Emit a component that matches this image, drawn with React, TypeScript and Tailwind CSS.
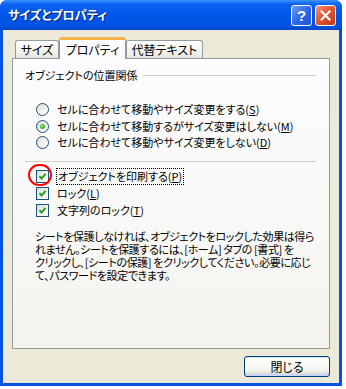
import React from "react";

const jp = "font-['Noto_Sans_CJK_JP',sans-serif] [font-feature-settings:'palt']";

function Radio({ checked }: { checked?: boolean }) {
  return (
    <span className="flex h-[13px] w-[13px] shrink-0 items-center justify-center rounded-full border border-[#1C5180] bg-[linear-gradient(135deg,#dcd9cf_0%,#f6f5f1_60%,#ffffff_100%)]">
      {checked && (
        <span className="h-[5px] w-[5px] rounded-full bg-[radial-gradient(circle_at_40%_40%,#a8e6a0_0%,#31b131_55%,#178a17_100%)]" />
      )}
    </span>
  );
}

function Check() {
  return (
    <span className="flex h-[13px] w-[13px] shrink-0 items-center justify-center border border-[#1C5180] bg-[linear-gradient(135deg,#dcd9cf_0%,#f6f5f1_60%,#ffffff_100%)]">
      <svg width="9" height="9" viewBox="0 0 9 9">
        <path d="M1.5 4.2 L3.6 6.4 L7.6 1.8" fill="none" stroke="#21A121" strokeWidth="2" />
      </svg>
    </span>
  );
}

export default function App() {
  return (
    <div className={`h-[389px] w-[346px] bg-white ${jp}`}>
      <div className="flex h-[386px] w-[342px] flex-col rounded-t-[7px] bg-[#0052E0] px-[3px] pb-[3px]">
        {/* title bar */}
        <div className="-mx-[3px] flex h-[30px] items-center rounded-t-[7px] bg-[linear-gradient(180deg,#3d93ff_0%,#0a62f2_14%,#0056e6_50%,#0053e2_86%,#0244c8_100%)] pl-[8px] pr-[6px]">
          <span className="flex-1 text-[12px] font-bold leading-none text-white [text-shadow:1px_1px_0_#0a1f80]">
            サイズとプロパティ
          </span>
          <div className="flex gap-[3px]">
            <span className="flex h-[21px] w-[21px] items-center justify-center rounded-[3px] border border-white bg-[linear-gradient(135deg,#6ea2fb_0%,#2d68ea_50%,#1f55d8_100%)] font-['Liberation_Sans',sans-serif] text-[15px] font-bold leading-none text-white">
              ?
            </span>
            <span className="flex h-[21px] w-[21px] items-center justify-center rounded-[3px] border border-white bg-[linear-gradient(135deg,#f29c80_0%,#e0562e_45%,#c53a18_100%)]">
              <svg width="11" height="11" viewBox="0 0 11 11">
                <path d="M1.5 1.5 L9.5 9.5 M9.5 1.5 L1.5 9.5" stroke="white" strokeWidth="2.2" strokeLinecap="square" />
              </svg>
            </span>
          </div>
        </div>

        {/* body */}
        <div className="flex flex-1 flex-col bg-[#ECE9D8] px-[9px] pt-[7px] pb-[6px] text-[11px] text-black">
          {/* tabs */}
          <div className="flex h-[21px] items-end pl-[3px] text-[12px]">
            <div className="flex h-[18px] w-[44px] items-center justify-center rounded-t-[3px] border border-b-0 border-[#919B9C] bg-[linear-gradient(180deg,#ffffff_0%,#f3f3ef_60%,#e6e5df_100%)] leading-none">
              サイズ
            </div>
            <div className="relative z-10 -mb-px flex h-[22px] w-[67px] items-center justify-center rounded-t-[3px] border border-b-0 border-t-[3px] border-[#919B9C] border-t-[#F5B14A] bg-[#FCFCFE] leading-none">
              プロパティ
            </div>
            <div className="flex h-[18px] w-[77px] items-center justify-center rounded-t-[3px] border border-b-0 border-[#919B9C] bg-[linear-gradient(180deg,#ffffff_0%,#f3f3ef_60%,#e6e5df_100%)] leading-none">
              代替テキスト
            </div>
          </div>

          {/* panel */}
          <div className="flex h-[291px] flex-col border border-[#919B9C] bg-[linear-gradient(180deg,#fcfcfe_0%,#f8f8f6_60%,#f4f3ee_100%)] pt-[10px]">
            <div className="mr-[13px] flex h-[12px] items-center gap-[5px] pl-[12px] leading-none">
              <span>オブジェクトの位置関係</span>
              <span className="h-px flex-1 bg-[#D0D0BF]" />
            </div>

            <div className="mt-[20px] flex flex-col pl-[23px]">
              <div className="flex h-[17px] items-center gap-[8px] leading-none">
                <Radio />
                <span>
                  セルに合わせて移動やサイズ変更をする(<span className="underline">S</span>)
                </span>
              </div>
              <div className="flex h-[16px] items-center gap-[8px] leading-none">
                <Radio checked />
                <span>
                  セルに合わせて移動するがサイズ変更はしない(<span className="underline">M</span>)
                </span>
              </div>
              <div className="flex h-[16px] items-center gap-[8px] leading-none">
                <Radio />
                <span>
                  セルに合わせて移動やサイズ変更をしない(<span className="underline">D</span>)
                </span>
              </div>
            </div>

            <div className="mt-[11px] mr-[13px] ml-[12px] h-px bg-[#D0D0BF]" />

            <div className="mt-[6px] flex flex-col pl-[23px]">
              <div className="flex h-[17px] items-center gap-[7px] leading-none">
                <span className="relative">
                  <Check />
                  <span className="absolute -top-[6px] -left-[8px] h-[22px] w-[24px] rounded-full border-[2.5px] border-[#FF0000]" />
                </span>
                <span className="border border-dotted border-black px-px py-[2px]">
                  オブジェクトを印刷する(<span className="underline">P</span>)
                </span>
              </div>
              <div className="flex h-[17px] items-center gap-[8px] leading-none">
                <Check />
                <span>
                  ロック(<span className="underline">L</span>)
                </span>
              </div>
              <div className="flex h-[17px] items-center gap-[8px] leading-none">
                <Check />
                <span>
                  文字列のロック(<span className="underline">T</span>)
                </span>
              </div>
            </div>

            <p className="mt-[11px] pl-[22px] leading-[13px] tracking-[-0.4px] whitespace-nowrap">
              シートを保護しなければ、オブジェクトをロックした効果は得ら
              <br />
              れません。シートを保護するには、[ホーム] タブの [書式] を
              <br />
              クリックし、[シートの保護] をクリックしてください。必要に応じ
              <br />
              て、パスワードを設定できます。
            </p>
          </div>

          {/* footer */}
          <div className="mt-[7px] flex justify-end">
            <button className="flex h-[21px] w-[86px] items-center justify-center rounded-[3px] border border-[#003C74] bg-[linear-gradient(180deg,#ffffff_0%,#f4f4f0_70%,#d6d0c5_100%)] text-[12px] leading-none shadow-[inset_0_-2px_0_#c9d6f5,inset_0_1px_0_#cee7ff]">
              閉じる
            </button>
          </div>
        </div>
      </div>
    </div>
  );
}
